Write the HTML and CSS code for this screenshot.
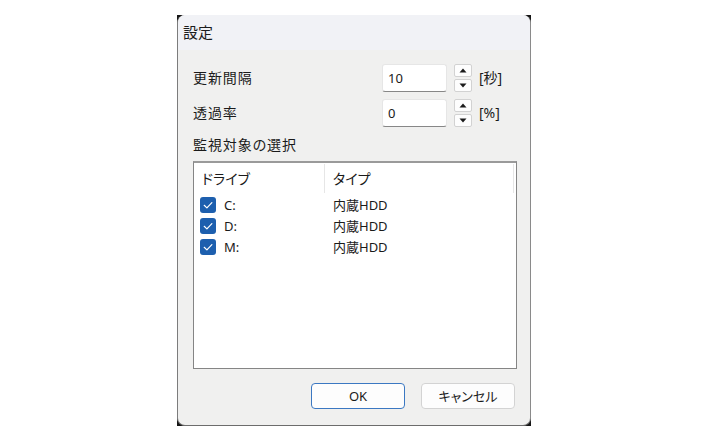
FILE: index.html
```html
<!DOCTYPE html>
<html lang="ja">
<head>
<meta charset="utf-8">
<title>設定</title>
<link rel="stylesheet" href="styles.css">
</head>
<body>
<div class="window">
  <div class="frame">
    <div class="titlebar">設定</div>
    <div class="content">
      <div class="field">
        <span class="label">更新間隔</span>
        <div class="input">10</div>
        <div class="spin">
          <span class="spin-btn"><svg width="8" height="5" viewBox="0 0 8 5"><polygon points="0.5,4.5 4,0.5 7.5,4.5" fill="#1a1a1a"/></svg></span>
          <span class="spin-btn"><svg width="8" height="5" viewBox="0 0 8 5"><polygon points="0.5,0.5 4,4.5 7.5,0.5" fill="#1a1a1a"/></svg></span>
        </div>
        <span class="unit">[秒]</span>
      </div>
      <div class="field">
        <span class="label">透過率</span>
        <div class="input">0</div>
        <div class="spin">
          <span class="spin-btn"><svg width="8" height="5" viewBox="0 0 8 5"><polygon points="0.5,4.5 4,0.5 7.5,4.5" fill="#1a1a1a"/></svg></span>
          <span class="spin-btn"><svg width="8" height="5" viewBox="0 0 8 5"><polygon points="0.5,0.5 4,4.5 7.5,0.5" fill="#1a1a1a"/></svg></span>
        </div>
        <span class="unit">[%]</span>
      </div>
      <div class="group-label">監視対象の選択</div>
      <div class="list">
        <div class="list-head">
          <div class="head-cell head-drive">ドライブ</div>
          <div class="head-cell head-type">タイプ</div>
          <div class="head-rest"></div>
        </div>
        <div class="list-row">
          <div class="cell-drive"><span class="check"><svg width="16" height="16" viewBox="0 0 16 16"><path d="M4.2 8.3 L6.9 10.9 L11.9 5.6" fill="none" stroke="#ffffff" stroke-width="1.2" stroke-linecap="round" stroke-linejoin="round"/></svg></span>C:</div>
          <div class="cell-type">内蔵HDD</div>
        </div>
        <div class="list-row">
          <div class="cell-drive"><span class="check"><svg width="16" height="16" viewBox="0 0 16 16"><path d="M4.2 8.3 L6.9 10.9 L11.9 5.6" fill="none" stroke="#ffffff" stroke-width="1.2" stroke-linecap="round" stroke-linejoin="round"/></svg></span>D:</div>
          <div class="cell-type">内蔵HDD</div>
        </div>
        <div class="list-row">
          <div class="cell-drive"><span class="check"><svg width="16" height="16" viewBox="0 0 16 16"><path d="M4.2 8.3 L6.9 10.9 L11.9 5.6" fill="none" stroke="#ffffff" stroke-width="1.2" stroke-linecap="round" stroke-linejoin="round"/></svg></span>M:</div>
          <div class="cell-type">内蔵HDD</div>
        </div>
      </div>
      <div class="buttons">
        <button class="btn btn-primary">OK</button>
        <button class="btn">キャンセル</button>
      </div>
    </div>
  </div>
</div>
</body>
</html>
```

FILE: styles.css
```css
* { box-sizing: border-box; }

html, body {
  margin: 0;
  padding: 0;
  background: #ffffff;
}

body {
  font-family: "Noto Sans", "Noto Sans CJK JP", sans-serif;
  font-feature-settings: "palt";
  color: #1a1a1a;
}

.window {
  width: 354px;
  height: 411px;
  margin: 15px 0 0 177px;
  background: #161616;
}

.frame {
  height: 100%;
  border-radius: 8px;
  background: #f0f0ef;
  border-left: 1px solid #7c7c7c;
  border-right: 1px solid #8a8a8a;
  border-bottom: 1px solid #6c6c6c;
  overflow: hidden;
  display: flex;
  flex-direction: column;
}

.titlebar {
  height: 35px;
  flex: none;
  background: #f1f2f6;
  padding-left: 5px;
  font-size: 15px;
  line-height: 35px;
  color: #1c1c1c;
}

.content {
  flex: 1;
  padding: 14px 13px 0 15px;
  display: flex;
  flex-direction: column;
}

.field {
  display: grid;
  grid-template-columns: 1fr 65px 18px 38px;
  column-gap: 7px;
  height: 28px;
  align-items: center;
  margin-bottom: 7px;
}

.label {
  font-size: 14px;
  line-height: 20px;
  letter-spacing: 0.9px;
}

.input {
  height: 28px;
  background: #ffffff;
  border: 1px solid #e6e6e6;
  border-bottom: 1px solid #878787;
  border-radius: 3px;
  padding-left: 5px;
  font-size: 13px;
  line-height: 26px;
}

.spin {
  height: 28px;
  display: flex;
  flex-direction: column;
  gap: 2px;
}

.spin-btn {
  flex: 1;
  background: #fdfdfd;
  border: 1px solid #d2d2d2;
  border-radius: 2px;
  display: flex;
  align-items: center;
  justify-content: center;
}

.unit {
  font-size: 14px;
  line-height: 20px;
}

.group-label {
  margin-top: 1px;
  height: 20px;
  font-size: 14px;
  line-height: 20px;
  letter-spacing: 0.9px;
  margin-bottom: 6px;
}

.list {
  height: 208px;
  flex: none;
  background: #ffffff;
  border: 1px solid #858585;
  border-top: 2px solid #9a9a9a;
}

.list-head {
  height: 31px;
  display: flex;
  font-size: 14px;
}

.head-cell {
  padding-left: 8px;
}

.head-drive {
  width: 131px;
  border-right: 1px solid #e6e6e6;
  margin: 1px 0;
  line-height: 29px;
}

.head-type {
  width: 189px;
  border-right: 1px solid #e6e6e6;
  margin: 1px 0;
  line-height: 29px;
}

.head-rest {
  flex: 1;
}

.list-row {
  height: 21px;
  display: flex;
  align-items: center;
  font-size: 13px;
}

.list-head + .list-row { margin-top: 0; }

.cell-drive {
  width: 132px;
  padding-left: 6px;
  display: flex;
  align-items: center;
  gap: 8px;
}

.check {
  width: 16px;
  height: 16px;
  border-radius: 3px;
  background: #1d5fae;
  display: flex;
}

.cell-type {
  padding-left: 7px;
}

.buttons {
  margin-top: 14px;
  display: flex;
  justify-content: flex-end;
  gap: 16px;
  padding-right: 2px;
}

.btn {
  width: 94px;
  height: 26px;
  border-radius: 4px;
  background: #fdfdfd;
  border: 1px solid #d3d3d3;
  font-family: "Noto Sans", "Noto Sans CJK JP", sans-serif;
  font-feature-settings: "palt";
  font-size: 13px;
  color: #1a1a1a;
  padding: 0;
  line-height: 24px;
}

.btn-primary {
  border: 1.5px solid #3b78c2;
}
```
